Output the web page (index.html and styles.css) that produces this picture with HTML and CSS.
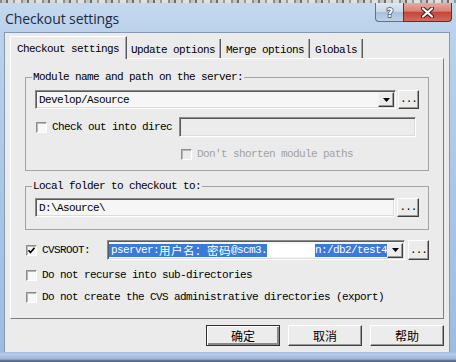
FILE: index.html
```html
<!DOCTYPE html>
<html lang="en">
<head>
<meta charset="utf-8">
<title>Checkout settings</title>
<link rel="stylesheet" href="styles.css">
</head>
<body>
<div class="window">
  <div class="titlebar">
    <div class="noise"></div>
    <div class="title-row">
      <span class="title">Checkout settings</span>
      <div class="caps">
        <span class="cap cap-help"><svg width="12" height="14" viewBox="0 0 12 14"><text x="6" y="12" text-anchor="middle" class="q">?</text></svg></span>
        <span class="cap cap-close"><svg width="13" height="11" viewBox="0 0 13 11"><path d="M2 1.5L11 9.5M11 1.5L2 9.5" class="x-out"/><path d="M2 1.5L11 9.5M11 1.5L2 9.5" class="x-in"/></svg></span>
      </div>
    </div>
  </div>

  <div class="client">
    <div class="tabs">
      <span class="tab tab-active">Checkout settings</span>
      <span class="tab tab-first">Update options</span>
      <span class="tab">Merge options</span>
      <span class="tab">Globals</span>
    </div>

    <div class="panel">
      <fieldset class="group group-module">
        <legend>Module name and path on the server:</legend>
        <div class="field-row">
          <div class="combo combo-module">
            <span class="combo-text">Develop/Asource</span>
            <span class="combo-arrow"><svg width="7" height="4" viewBox="0 0 7 4"><path d="M0 0h7l-3.5 4z"/></svg></span>
          </div>
          <span class="btn-dots">...</span>
        </div>
        <div class="check-row row-into">
          <span class="checkbox"></span>
          <span class="label label-into">Check out into direc</span>
          <span class="textbox textbox-into"></span>
        </div>
        <div class="check-row row-shorten">
          <span class="checkbox checkbox-disabled"></span>
          <span class="label label-disabled">Don't shorten module paths</span>
        </div>
      </fieldset>

      <fieldset class="group group-local">
        <legend>Local folder to checkout to:</legend>
        <div class="field-row">
          <div class="textbox textbox-local"><span class="combo-text">D:\Asource\</span></div>
          <span class="btn-dots btn-dots-wide">...</span>
        </div>
      </fieldset>

      <div class="check-row row-cvsroot">
        <span class="checkbox checkbox-root"><svg width="9" height="9" viewBox="0 0 9 9"><path d="M1.5 4.2L3.5 6.5L7.5 1.8" class="tick"/></svg></span>
        <span class="label label-root">CVSROOT:</span>
        <div class="combo combo-root">
          <span class="combo-text combo-sel"><span class="sel">pserver:<span class="cjk">用户名：密码</span>@scm3.<span class="redact"></span>n:/db2/test4</span></span>
          <span class="combo-arrow"><svg width="7" height="4" viewBox="0 0 7 4"><path d="M0 0h7l-3.5 4z"/></svg></span>
        </div>
        <span class="btn-dots btn-dots-root">...</span>
      </div>

      <div class="check-row row-recurse">
        <span class="checkbox"></span>
        <span class="label label-root">Do not recurse into sub-directories</span>
      </div>
      <div class="check-row row-export">
        <span class="checkbox"></span>
        <span class="label label-root">Do not create the CVS administrative directories (export)</span>
      </div>
    </div>

    <div class="buttons">
      <span class="btn btn-default">确定</span>
      <span class="btn">取消</span>
      <span class="btn">帮助</span>
    </div>
  </div>
</div>
</body>
</html>
```

FILE: styles.css
```css
* { box-sizing: border-box; }
html, body { margin: 0; padding: 0; }
body {
  width: 456px;
  height: 362px;
  overflow: hidden;
  background: #a9c3e3;
}

.window {
  width: 456px;
  height: 362px;
  display: flex;
  flex-direction: column;
  background: linear-gradient(180deg, #c6d9ef 0px, #bcd2eb 30px, #aac5e6 200px, #9fbce0 352px, #b7cdea 354px, #9cb7dc 359px, #56657a 361px);
}

/* ---------- title bar ---------- */
.titlebar {
  height: 32px;
  display: flex;
  flex-direction: column;
}
.noise {
  height: 3px;
  background: repeating-linear-gradient(90deg, #8c8c8c 0 2px, #c4c4c4 2px 6px, #6e6e6e 6px 8px, #d6d6d6 8px 13px, #9a9a9a 13px 15px, #e0e0e0 15px 21px);
}
.title-row {
  height: 29px;
  display: flex;
  justify-content: space-between;
  align-items: flex-start;
  padding: 0 4px 0 5px;
}
.title {
  font-family: "Open Sans", "Noto Sans", sans-serif;
  font-size: 14px;
  line-height: 19px;
  margin-top: 6px;
  color: #1b2c42;
  letter-spacing: -0.1px;
}
.caps { display: flex; }
.cap {
  height: 19px;
  display: flex;
  align-items: center;
  justify-content: center;
}
.cap-help {
  width: 28px;
  border: 1px solid #5f728c;
  border-top: none;
  border-right: none;
  border-radius: 0 0 0 4px;
  background: linear-gradient(180deg, #dfe8f3 0%, #c8d7ea 48%, #a9bfdb 52%, #bfd1e8 100%);
}
.q {
  font-family: "DejaVu Sans", sans-serif;
  font-weight: bold;
  font-size: 12px;
  fill: #ffffff;
  stroke: #3b4b62;
  stroke-width: 1.4px;
  paint-order: stroke;
}
.cap-close {
  width: 49px;
  border: 1px solid #5e2f2f;
  border-top: none;
  border-radius: 0 0 4px 0;
  background: linear-gradient(180deg, #e7aaa2 0%, #d88274 45%, #c4463a 52%, #d36a5c 100%);
}
.x-out { stroke: #4b1c1c; stroke-width: 4.2; stroke-linecap: round; fill: none; }
.x-in { stroke: #ffffff; stroke-width: 2.2; stroke-linecap: round; fill: none; }

/* ---------- client ---------- */
.client {
  margin: 0 6px 0 4px;
  height: 320px;
  border: 1px solid #8598b1;
  border-bottom: none;
  background: #ebebeb;
  padding: 3px 5px 0 5px;
  display: flex;
  flex-direction: column;
  font-family: "Liberation Mono", "Courier New", "DejaVu Sans Mono", monospace;
  font-size: 11px;
  letter-spacing: -0.6px;
  color: #000;
}

/* tabs */
.tabs {
  height: 22px;
  display: flex;
  align-items: flex-end;
}
.tab {
  height: 19px;
  line-height: 12px;
  padding: 5px 5px 0 5px;
  border-right: 1px solid #5a5a5a;
  box-shadow: inset -1px 0 #a8a8a8;
  white-space: nowrap;
}
.tab-first { margin-left: -1px; }
.tab-active {
  position: relative;
  height: 23px;
  margin-bottom: -1px;
  padding: 6px 7px 0 6px;
  background: #ebebeb;
  border-left: 1px solid #ffffff;
  border-top: 1px solid #ffffff;
  border-right: 1px solid #5a5a5a;
}

/* panel */
.panel {
  width: 434px;
  height: 261px;
  border-top: 1px solid #ffffff;
  border-left: 1px solid #ffffff;
  border-right: 1px solid #7c7c7c;
  border-bottom: 1px solid #7c7c7c;
  padding: 12px 14px 0 14px;
  display: flex;
  flex-direction: column;
}

.group {
  margin: 0;
  width: 404px;
  min-width: 0;
  border: 1px solid #a3a3a3;
  padding: 7px 9px 12px 9px;
}
.group legend {
  padding: 0 1px;
  margin-left: -3px;
  line-height: 12px;
  white-space: nowrap;
}
.group-module { padding-bottom: 10px; }
.group-local { margin-top: 9px; padding-top: 6px; }

.field-row {
  display: flex;
  gap: 2px;
  height: 19px;
}

/* sunken fields */
.combo, .textbox {
  display: flex;
  align-items: center;
  height: 19px;
  border-top: 1px solid #8a8a8a;
  border-left: 1px solid #8a8a8a;
  border-bottom: 1px solid #ffffff;
  border-right: 1px solid #ffffff;
  box-shadow: inset 1px 1px #5a5a5a, inset -1px -1px #dcdcdc;
  background: #f6f6f6;
  padding: 1px;
}
.combo-module { width: 361px; }
.textbox-local { width: 360px; }
.combo-text {
  flex: 1;
  padding-left: 2px;
  line-height: 12px;
  white-space: nowrap;
  overflow: hidden;
}
.combo-arrow {
  width: 16px;
  height: 15px;
  display: flex;
  align-items: center;
  justify-content: center;
  background: #ececec;
  border-top: 1px solid #f4f4f4;
  border-left: 1px solid #f4f4f4;
  border-right: 1px solid #404040;
  border-bottom: 1px solid #404040;
  box-shadow: inset -1px -1px #9a9a9a;
}
.combo-arrow svg { fill: #000; }

.btn-dots {
  width: 21px;
  height: 19px;
  display: flex;
  align-items: flex-end;
  justify-content: center;
  padding-bottom: 4px;
  line-height: 10px;
  letter-spacing: -1px;
  background: #ececec;
  border-top: 1px solid #ffffff;
  border-left: 1px solid #ffffff;
  border-right: 1px solid #404040;
  border-bottom: 1px solid #404040;
  box-shadow: inset -1px -1px #9a9a9a;
}
.btn-dots-wide { width: 22px; }

/* checkbox rows */
.check-row {
  display: flex;
  align-items: center;
}
.row-into { margin-top: 8px; height: 20px; }
.row-shorten { margin-top: 11px; height: 12px; padding-left: 145px; }
.row-cvsroot { margin-top: 10px; height: 20px; }
.row-recurse { margin-top: 9px; height: 12px; }
.row-export { margin-top: 10px; height: 12px; }

.checkbox {
  width: 11px;
  height: 11px;
  margin-left: 1px;
  flex: none;
  border-top: 1px solid #8c8c8c;
  border-left: 1px solid #8c8c8c;
  border-bottom: 1px solid #ffffff;
  border-right: 1px solid #ffffff;
  box-shadow: inset 1px 1px #b8b8b8;
  background: #f8f8f8;
  display: flex;
  align-items: center;
  justify-content: center;
}
.checkbox-disabled { background: #ebebeb; }
.tick { fill: none; stroke: #000; stroke-width: 1.7; }

.label { line-height: 12px; white-space: nowrap; }
.label-into { margin-left: 5px; width: 120px; }
.textbox-into { margin-left: 7px; width: 237px; height: 20px; background: #ececec; }
.label-disabled { margin-left: 5px; color: #a2a2a2; }
.label-root { margin-left: 5px; }

.combo-root { margin-left: 17px; width: 298px; height: 20px; }
.combo-sel { padding-left: 0; height: 14px; display: flex; align-items: center; }
.sel {
  background: #3a7ad8;
  color: #ffffff;
  display: flex;
  align-items: center;
  height: 13px;
  width: 279px;
  padding-left: 2px;
  overflow: hidden;
}
.cjk {
  font-family: "Noto Sans CJK SC", sans-serif;
  font-size: 11.5px;
  letter-spacing: 0.5px;
  line-height: 12px;
}
.redact {
  display: inline-block;
  width: 48px;
  height: 13px;
  background: #ffffff;
}
.btn-dots-root { margin-left: 3px; width: 22px; height: 20px; }

/* dialog buttons */
.buttons {
  display: flex;
  justify-content: flex-end;
  gap: 8px;
  margin-top: 6px;
  padding-right: 0;
}
.btn {
  width: 74px;
  height: 21px;
  display: flex;
  align-items: center;
  justify-content: center;
  font-family: "Noto Sans CJK SC", sans-serif;
  font-size: 12px;
  letter-spacing: 0;
  background: #ececec;
  border-top: 1px solid #ffffff;
  border-left: 1px solid #ffffff;
  border-right: 1px solid #404040;
  border-bottom: 1px solid #404040;
  box-shadow: inset -1px -1px #9a9a9a;
}
.btn-default {
  border: 1px solid #303030;
  box-shadow: inset 1px 1px #ffffff, inset -2px -2px #8a8a8a;
}
```
